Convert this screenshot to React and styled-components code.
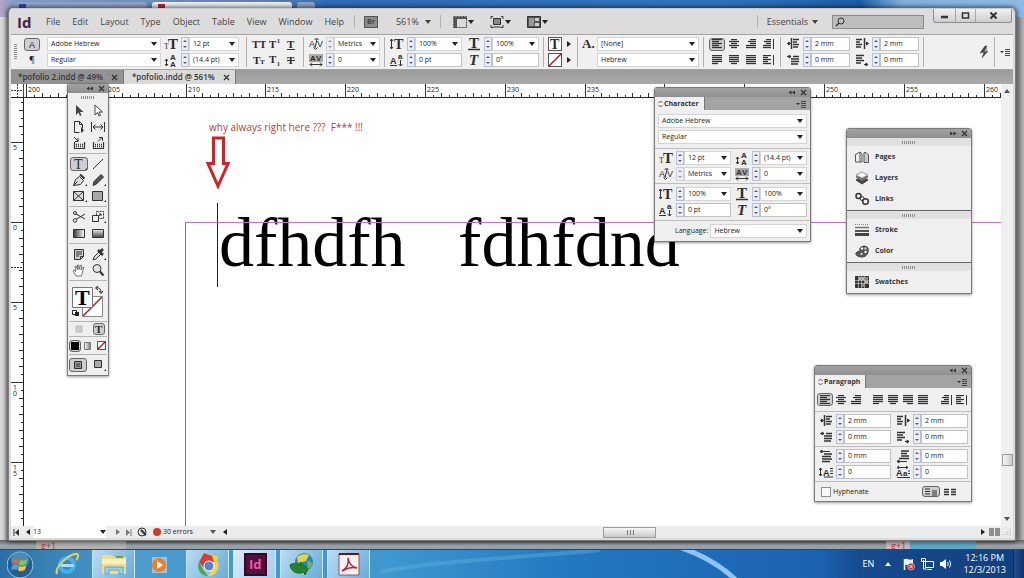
import React from "react";
import styled, { createGlobalStyle, css } from "styled-components";

const ui = `"Open Sans", "Noto Sans", sans-serif`;
const ink = "#333";

const Global = createGlobalStyle`
  * { box-sizing: border-box; }
  html, body { margin: 0; padding: 0; }
  body { font-family: ${ui}; font-size: 7px; line-height: 10px; color: #222; }
  button, input, select { font: inherit; color: inherit; margin: 0; padding: 0; border: 0; background: none; border-radius: 0; outline: 0; }
  button { display: flex; align-items: center; justify-content: center; flex: none; }
  svg { display: block; flex: none; }
`;

/* ---------- desktop ---------- */
const Desktop = styled.div`
  min-height: 100vh;
  display: flex;
  flex-direction: column;
  overflow: hidden;
  background: linear-gradient(90deg, #d8d8d8 0 3px, #a9a9a9 8px, #a9a9a9 calc(100% - 7px), #8c8c8c calc(100% - 6px), #b4b4b4 100%);
  position: relative;
`;
const SharedDefs = styled.svg`
  position: absolute;
`;
const BrowserStrip = styled.div`
  position: absolute;
  inset: 0 0 auto 0;
  height: 17px;
  display: flex;
  gap: 5px;
  padding: 2px 0 0 13px;
  background: linear-gradient(90deg, #b9a7c6 0, #7f9cc9 14px, #5f7db0 26%, #2f6cb5 32%, #2f74c0 70%, #1f5da6 84%, #7fb0de 88%, #8dbbe6 100%);
`;
const BrowserTab = styled.div`
  width: ${(p) => p.$w}px;
  border-radius: 3px 3px 0 0;
  padding: 2px 6px;
  background: ${(p) => (p.$active ? "#eef1f8" : "#93a6cf")};
`;
const Favicon = styled.div`
  width: 7px;
  height: 7px;
  background: ${(p) => p.$c};
`;
const Stage = styled.div`
  flex: 1;
  display: flex;
  padding: 8px;
  position: relative;
`;
const PageBits = styled.div`
  position: absolute;
  inset: auto 0 0 0;
  height: 9px;
  overflow: hidden;
  display: flex;
  padding-left: 36px;
  background: linear-gradient(#5f6266, #a3a5a8 60%, #8aa0b0);
`;
const PlusOne = styled.div`
  width: 90px;
  padding-left: 5px;
  color: #b8342a;
  font-size: 9px;
  line-height: 12px;
  background: ${(p) => (p.$blue ? "linear-gradient(90deg,#c9b9ba 24px,#5fa8c6 24px)" : "#b5b3b0")};
  margin-left: ${(p) => (p.$blue ? "auto" : "0")};
  margin-right: ${(p) => (p.$blue ? "48px" : "0")};
`;

/* ---------- window ---------- */
const Window = styled.main`
  flex: 1;
  display: flex;
  flex-direction: column;
  position: relative;
  border-radius: 5px 5px 2px 2px;
  border: 1px solid #7b7b7b;
  border-top-color: #c9c9c9;
  padding: 0 2px 2px;
  background: #dcdcdc;
  box-shadow: 0 0 5px 1px rgba(0, 0, 0, 0.65);
`;
const MenuBar = styled.header`
  height: 25px;
  display: flex;
  align-items: center;
  padding-left: 6px;
  font-size: 9px;
  line-height: 12px;
  color: #444;
`;
const Logo = styled.div`
  width: 29px;
  font-size: 15px;
  line-height: 18px;
  font-weight: 700;
  color: #4c2043;
`;
const Menus = styled.nav`
  display: flex;
  gap: 12px;
  margin-right: 10px;
`;
const MenuItem = styled.button`
  && { height: 14px; }
`;
const Rule = styled.div`
  width: 1px;
  align-self: stretch;
  margin: ${(p) => (p.$bar ? "2px 4px" : "6px 0")};
  background: #b2b2b2;
  flex: none;
`;
const BridgeButton = styled.button`
  && {
    width: 14px;
    height: 12px;
    margin: 0 18px 0 9px;
    border: 1px solid #555;
    background: #8b8b8b;
    font-size: 7px;
    line-height: 8px;
    font-weight: 700;
  }
`;
const Tri = styled.span`
  display: block;
  flex: none;
  width: 0;
  height: 0;
  border: 3px solid transparent;
  ${(p) => p.$dir === "left" ? css`border-right: 4px solid ${p.$c || "#222"}; border-left: 0;`
    : p.$dir === "right" ? css`border-left: 4px solid ${p.$c || "#222"}; border-right: 0;`
    : p.$dir === "up" ? css`border-bottom: 4px solid ${p.$c || "#222"}; border-top: 0;`
    : css`border-top: 4px solid ${p.$c || "#222"}; border-bottom: 0;`}
`;
const Zoom = styled.button`
  && { gap: 6px; margin-right: 9px; }
`;
const ViewMenus = styled.div`
  display: flex;
  gap: 16px;
  padding-left: 12px;
`;
const ViewButton = styled.button`
  && { gap: 1px; }
`;
const MenuRight = styled.div`
  margin-left: auto;
  display: flex;
  align-self: stretch;
  align-items: center;
`;
const Essentials = styled.button`
  && { gap: 4px; margin: 0 14px 0 9px; }
`;
const Search = styled.label`
  width: 92px;
  height: 14px;
  display: flex;
  align-items: center;
  padding-left: 2px;
  margin-right: 9px;
  border: 1px solid #8b8b8b;
  background: #bdbdbd;
  input { width: 70px; }
`;
const Caption = styled.div`
  align-self: flex-start;
  display: flex;
  margin-right: 1px;
  height: 14px;
  border: 1px solid #8f8f8f;
  border-top: 0;
  border-radius: 0 0 3px 3px;
  background: linear-gradient(#f0f0f0, #cfcfcf);
`;
const CaptionButton = styled.button`
  && { width: ${(p) => p.$w}px; }
  && + & { border-left: 1px solid #a5a5a5; }
`;

/* ---------- shared fields ---------- */
const Combo = styled.span`
  display: flex;
  align-items: center;
  width: ${(p) => (p.$w ? p.$w + "px" : "auto")};
  flex: ${(p) => (p.$w ? "none" : "1")};
  height: 14px;
  background: #fff;
  border: 1px solid #d5d5d5;
  padding-right: 3px;
  select { appearance: none; flex: 1; min-width: 0; height: 12px; padding-left: 3px; }
`;
const TextBox = styled.input`
  && { width: ${(p) => p.$w}px; height: 14px; background: #fff; border: 1px solid #c2c2c2; padding: 0 0 1px 3px; }
`;
const SpinBox = styled.span`
  width: 8px;
  height: 14px;
  flex: none;
  display: grid;
  grid-template-rows: 1fr 1fr;
  border: 1px solid #b9bfce;
  background: #eceef6;
  opacity: ${(p) => (p.$off ? 0.6 : 1)};
  span { border-width: 2px; }
`;
const FieldRow = styled.div`
  display: flex;
  align-items: center;
`;
const IconSlot = styled.span`
  width: 16px;
  margin-right: 2px;
  display: flex;
  justify-content: center;
`;

function Select({ label, value, w }) {
  return (
    <Combo $w={w}>
      <select aria-label={label} defaultValue={value}><option>{value}</option></select>
      <Tri />
    </Combo>
  );
}
function Spin({ label, off }) {
  return (
    <SpinBox $off={off}>
      <button aria-label={`Increase ${label}`} disabled={off}><Tri $dir="up" $c="#56617f" /></button>
      <button aria-label={`Decrease ${label}`} disabled={off}><Tri $c="#56617f" /></button>
    </SpinBox>
  );
}
function Field({ icon, label, value, w, text, off }) {
  return (
    <FieldRow>
      <IconSlot>{icon}</IconSlot>
      <Spin label={label} off={off} />
      {text ? <TextBox aria-label={label} defaultValue={value} $w={w} /> : <Select label={label} value={value} w={w} />}
    </FieldRow>
  );
}

/* ---------- icons ---------- */
const Svg = ({ w = 14, h = 14, children }) => (
  <svg width={w} height={h} viewBox={`0 0 ${w} ${h}`} fill="none" stroke={ink} strokeWidth="1">{children}</svg>
);
const G = ({ x, y, s, children, b = 700, i, f = "Liberation Serif" }) => (
  <text x={x} y={y} fontSize={s} fontWeight={b} fontStyle={i ? "italic" : "normal"} fontFamily={`"${f}", serif`} fill="#2c2c2c" stroke="none">{children}</text>
);
const SizeIcon = () => <Svg><G x="0" y="12" s="8" b={400}>T</G><G x="4" y="12" s="15">T</G></Svg>;
const LeadIcon = () => <Svg><G x="6" y="7" s="8" f="Liberation Sans">A</G><G x="6" y="14" s="8" f="Liberation Sans">A</G><path d="M2.500 6v7M1 8l1.500-2L4 8M1 11l1.500 2L4 11" /></Svg>;
const KernIcon = () => <Svg><G x="0" y="10" s="9" f="Liberation Sans" b={400}>A</G><G x="8" y="10" s="9" f="Liberation Sans" b={400}>V</G><path d="M8 2L6 11M5.500 3l2-2 2 2M4.500 10.500l2 2 2-2" /></Svg>;
const TrackIcon = () => <Svg><path d="M0 1h14v8H0z" fill="#aaa" stroke="none" /><G x="1" y="8" s="8" f="Liberation Sans">A</G><G x="7" y="8" s="8" f="Liberation Sans">V</G><path d="M1 11.500h12M3 9.500l-2 2 2 2M11 9.500l2 2-2 2" /></Svg>;
const VScaleIcon = () => <Svg><G x="4" y="12" s="14">T</G><path d="M1.500 2v10M0 4l1.500-2L3 4M0 10l1.500 2L3 10" /></Svg>;
const HScaleIcon = () => <Svg><G x="2" y="11" s="15">T</G><path d="M1 12.500h12" strokeWidth="1.500" /></Svg>;
const BaseIcon = () => <Svg><G x="0" y="11" s="9" f="Liberation Sans">A</G><G x="8" y="6" s="8" f="Liberation Sans">a</G><path d="M0 12.500h7M10.500 7v6M8.500 11l2 2 2-2" /></Svg>;
const SkewIcon = () => <Svg><G x="2" y="12" s="15" i>T</G></Svg>;

const widths = {
  left: [[0, 10], [0, 7], [0, 10], [0, 7], [0, 10]],
  center: [[2, 6], [0, 10], [2, 6], [0, 10], [2, 6]],
  right: [[4, 6], [2, 8], [4, 6], [0, 10], [0, 10]],
  jleft: [[0, 10], [0, 10], [0, 10], [0, 10], [0, 6]],
  jcenter: [[0, 10], [0, 10], [0, 10], [0, 10], [2, 6]],
  jright: [[0, 10], [0, 10], [0, 10], [0, 10], [4, 6]],
  justify: [[0, 10], [0, 10], [0, 10], [0, 10], [0, 10]],
  spine: [[3, 5], [1, 7], [3, 5], [0, 8], [0, 8]],
  away: [[0, 8], [0, 5], [0, 8], [0, 5], [0, 8]],
};
const AlignIcon = ({ t }) => (
  <Svg w={12} h={10}>
    {widths[t].map(([x, w], i) => <path key={i} d={`M${x + 1} ${i * 2 + 0.5}h${w}`} stroke="#333" strokeWidth="1.300" />)}
    {(t === "spine" || t === "away") && <path d="M11.500 0v10" />}
  </Svg>
);
const IndentIcon = ({ t }) => {
  const p = {
    left: <><path d="M5.500 1v11M7 2.500h6M7 5h4M7 7.500h6M7 10h5" strokeWidth="1.500" /><path d="M1 6.500h3M2.500 5l2 1.500-2 1.500z" fill={ink} /></>,
    right: <><path d="M9.500 1v11M1 2.500h6M1 5h4M1 7.500h6M1 10h5" strokeWidth="1.500" /><path d="M11 6.500h2M11.500 5l2 1.500-2 1.500z" fill={ink} /></>,
    first: <><path d="M7 3.500h6M5 6h8M5 8.500h8M5 11h7" strokeWidth="1.500" /><path d="M1 3.500h4M3 2l2 1.500-2 1.500z" fill={ink} /></>,
    last: <><path d="M1 2.500h8M1 5h6M1 7.500h8M1 10h5" strokeWidth="1.500" /><path d="M9 11.500h3M11 10l2 1.500-2 1.500z" fill={ink} /></>,
    before: <><path d="M5 5h8M3 7.500h9M3 10h10M3 12.500h8" strokeWidth="1.500" /><path d="M1 2.500h10M3 1L1 2.500 3 4z" fill={ink} /></>,
    after: <><path d="M5 2h8M5 4.500h6M5 7h8M3 9.500h10" strokeWidth="1.500" /><path d="M1 12.500h10M3 11l-2 1.500L3 14z" fill={ink} /></>,
    drop: <><G x="4" y="11" s="9" f="Liberation Sans">A</G><path d="M11 3.500h3M11 6h3M11 8.500h3M5 12h9M1.500 3v8M0 5l1.500-2L3 5M0 9l1.500 2L3 9" /></>,
    auto: <><G x="0" y="11" s="9" f="Liberation Sans">A</G><G x="7" y="11" s="8" f="Liberation Sans">a</G><path d="M1 2.500h11M10 1l2 1.500L10 4M3 1L1 2.500 3 4M1 12.500h13M12 6h2M12 8.500h2" /></>,
  };
  return <Svg>{p[t]}</Svg>;
};
const FillT = () => <Svg><rect x=".5" y=".5" width="13" height="13" fill="#fff" stroke="#555" /><G x="2" y="12" s="14">T</G></Svg>;
const NoneBox = ({ s = 14 }) => <Svg w={s} h={s}><rect x=".5" y=".5" width={s - 1} height={s - 1} fill="#fff" stroke="#555" /><path d={`M1 ${s - 1}L${s - 1} 1`} stroke="#b0152d" strokeWidth="1.500" /></Svg>;
const MenuGlyph = () => <Svg w={12} h={10}><path d="M1 4h4L3 6z" fill={ink} stroke="none" /><path d="M6 2.500h5M6 4.500h5M6 6.500h5M6 8.500h5" stroke="#444" /></Svg>;
const Cross = () => <Svg w={7} h={7}><path d="M1 1l5 5M6 1L1 6" strokeWidth="1.200" /></Svg>;
const Doubles = ({ flip }) => <Svg w={8} h={7}><path d={flip ? "M1 1.500l3 2-3 2zM4.500 1.500l3 2-3 2z" : "M3.500 1.500l-3 2 3 2zM7 1.500l-3 2 3 2z"} fill={ink} stroke="none" /></Svg>;

/* ---------- control bar ---------- */
const ControlBar = styled.section`
  height: 36px;
  display: flex;
  align-items: center;
  padding: 0 2px 0 3px;
  background: #f0f0f0;
  border: 1px solid #a3a3a3;
  border-width: 1px 0;
`;
const Grip = styled.div`
  flex: none;
  width: ${(p) => (p.$v ? 3 : 14)}px;
  height: ${(p) => (p.$v ? 16 : 3)}px;
  background: ${(p) => p.$v
    ? "repeating-linear-gradient(#8d8d8d 0 1px, transparent 1px 2px)"
    : "repeating-linear-gradient(90deg, #8d8d8d 0 1px, transparent 1px 2px)"};
`;
const Stack = styled.div`
  display: grid;
  grid-template-rows: 14px 14px;
  row-gap: 2px;
  margin-left: ${(p) => p.$ml || 0}px;
  margin-right: ${(p) => p.$mr || 0}px;
  align-items: center;
`;
const Mode = styled.button`
  && {
    width: ${(p) => p.$w || 16}px;
    height: ${(p) => p.$h || 13}px;
    border: 1px solid ${(p) => (p.$on ? "#666" : "transparent")};
    border-radius: 3px;
    background: ${(p) => (p.$on ? "#cfcfcf" : "transparent")};
    font-size: 9px;
  }
`;
const Cells = styled.div`
  display: grid;
  grid-template-columns: repeat(${(p) => p.$n}, ${(p) => p.$w}px);
  grid-auto-rows: 14px;
  row-gap: 2px;
  justify-items: center;
  align-items: center;
`;
const PopRow = styled.div`
  display: flex;
  align-items: center;
  gap: 5px;
  padding-right: 2px;
`;
const Push = styled.div`
  margin-left: auto;
`;

function TypeStyles() {
  return (
    <Cells $n={3} $w={16}>
      <button aria-label="All caps"><Svg><G x="0" y="11" s="11">TT</G></Svg></button>
      <button aria-label="Superscript"><Svg><G x="1" y="11" s="11">T</G><G x="9" y="6" s="6">1</G></Svg></button>
      <button aria-label="Underline"><Svg><G x="3" y="11" s="11">T</G><path d="M3 12.500h8" /></Svg></button>
      <button aria-label="Small caps"><Svg><G x="1" y="11" s="11">T</G><G x="8" y="11" s="7">T</G></Svg></button>
      <button aria-label="Subscript"><Svg><G x="1" y="10" s="11">T</G><G x="9" y="13" s="6">1</G></Svg></button>
      <button aria-label="Strikethrough"><Svg><G x="3" y="11" s="11">T</G><path d="M3 7.500h8" /></Svg></button>
    </Cells>
  );
}
function Controls() {
  return (
    <ControlBar aria-label="Control">
      <Grip $v />
      <Stack $ml={7}>
        <Mode $on aria-label="Character formatting"><Svg w={9} h={9}><G x="1" y="8" s="9" b={400} f="Liberation Sans">A</G></Svg></Mode>
        <Mode aria-label="Paragraph formatting">¶</Mode>
      </Stack>
      <Stack $ml={7}>
        <Select label="Font family" value="Adobe Hebrew" w={114} />
        <Select label="Font style" value="Regular" w={114} />
      </Stack>
      <Stack $ml={2} $mr={3}>
        <Field icon={<SizeIcon />} label="Font size" value="12 pt" w={50} />
        <Field icon={<LeadIcon />} label="Leading" value="(14.4 pt)" w={50} />
      </Stack>
      <Rule $bar />
      <TypeStyles />
      <Rule $bar />
      <Stack>
        <Field icon={<KernIcon />} label="Kerning" value="Metrics" w={46} off />
        <Field icon={<TrackIcon />} label="Tracking" value="0" w={46} />
      </Stack>
      <Rule $bar />
      <Stack>
        <Field icon={<VScaleIcon />} label="Vertical scale" value="100%" w={47} />
        <Field icon={<BaseIcon />} label="Baseline shift" value="0 pt" w={47} text />
      </Stack>
      <Stack $ml={4}>
        <Field icon={<HScaleIcon />} label="Horizontal scale" value="100%" w={47} />
        <Field icon={<SkewIcon />} label="Skew" value="0°" w={47} text />
      </Stack>
      <Rule $bar />
      <Stack>
        <PopRow><FillT /><Tri $dir="right" /></PopRow>
        <PopRow><NoneBox /><Tri $dir="right" /></PopRow>
      </Stack>
      <Rule $bar />
      <Stack>
        <FieldRow><Svg w={15}><G x="0" y="11" s="13">A.</G></Svg><Select label="Character style" value="[None]" w={102} /></FieldRow>
        <FieldRow><Svg w={15} /><Select label="Language" value="Hebrew" w={102} /></FieldRow>
      </Stack>
      <Rule $bar />
      <Cells $n={4} $w={17}>
        <Mode $on aria-label="Align left"><AlignIcon t="left" /></Mode>
        {["center", "right", "spine", "jleft", "jcenter", "justify", "away"].map((t) => (
          <Mode key={t} aria-label={`Align ${t}`}><AlignIcon t={t} /></Mode>
        ))}
      </Cells>
      <Rule $bar />
      <Stack>
        <Field icon={<IndentIcon t="left" />} label="Left indent" value="2 mm" w={39} text />
        <Field icon={<IndentIcon t="first" />} label="First line indent" value="0 mm" w={39} text />
      </Stack>
      <Stack $ml={4}>
        <Field icon={<IndentIcon t="right" />} label="Right indent" value="2 mm" w={39} text />
        <Field icon={<IndentIcon t="last" />} label="Last line indent" value="0 mm" w={39} text />
      </Stack>
      <Rule $bar />
      <Push />
      <button aria-label="Quick apply"><Svg w={12}><path d="M7 1L2 8l4-1-2 6 6-7-4 1 3-6zM9 3l-1 3" fill="#444" stroke="#444" strokeWidth=".5" /></Svg></button>
      <Rule $bar />
      <button aria-label="Control panel menu"><MenuGlyph /></button>
    </ControlBar>
  );
}

/* ---------- document ---------- */
const Tabs = styled.div`
  height: 14px;
  display: flex;
  background: linear-gradient(#9b9b9b, #a9a9a9);
`;
const Tab = styled.button`
  && {
    gap: 8px;
    padding: 0 5px 0 ${(p) => (p.$on ? 8 : 7)}px;
    background: ${(p) => (p.$on ? "#dadada" : "#929292")};
    border-right: 1px solid #777;
    font-size: 8px;
    font-weight: 600;
    color: #363636;
  }
`;
const DocGrid = styled.div`
  flex: 1;
  display: grid;
  grid-template-columns: 13px 1fr 12px;
  grid-template-rows: 14px 1fr;
  background: #fff;
`;
const RulerBox = styled.div`
  overflow: hidden;
  background: #fff;
  border-bottom: ${(p) => (p.$h ? "1px solid #222" : 0)};
  border-right: ${(p) => (p.$h ? 0 : "1px solid #222")};
  position: relative;
  svg { position: absolute; inset: 0; }
`;
const Canvas = styled.div`
  position: relative;
  overflow: hidden;
  min-height: 428px;
`;
const PageFrame = styled.div`
  position: absolute;
  inset: 124px 0 0 161px;
  border: solid;
  border-width: 1px 0 0 1px;
  border-color: #c46fd0 transparent transparent #a35cb4;
`;
const Note = styled.p`
  position: absolute;
  left: 185px;
  top: 22px;
  margin: 0;
  font-size: 10px;
  line-height: 14px;
  white-space: pre;
  color: #c0393d;
`;
const ArrowMark = styled.div`
  position: absolute;
  left: 182px;
  top: 38px;
`;
const Story = styled.div`
  position: absolute;
  left: 193px;
  top: 105px;
  height: 84px;
  padding-left: 1px;
  border-left: 1px solid #222;
  font-family: "Liberation Serif", serif;
  font-size: 70px;
  line-height: 80px;
  white-space: pre;
  color: #000;
`;
const VScroll = styled.div`
  grid-column: 3;
  grid-row: 1 / 3;
  display: flex;
  flex-direction: column;
  align-items: center;
  padding: 5px 0;
  background: #efefef;
`;
const ThumbV = styled.div`
  width: 11px;
  height: 12px;
  margin: auto 0 51px;
  border: 1px solid #9c9c9c;
  background: linear-gradient(90deg, #f6f6f6, #c9c9c9);
`;

const range = (n) => Array.from({ length: n }, (_, i) => i);
const step = 79.8;
function HRuler() {
  return (
    <RulerBox $h>
      <svg width="2400" height="14" stroke="#333">
        {range(300).map((i) => {
          const x = Math.round(2 + (i * step) / 10) + 0.5;
          const major = i % 10 === 0;
          return <path key={i} d={`M${x} ${major ? 0 : i % 2 ? 11 : 9}V14`} />;
        })}
        {range(13).map((i) => (
          <text key={i} x={Math.round(4 + i * step)} y="8" fontSize="7" fill="#222" stroke="none">{200 + i * 5}</text>
        ))}
      </svg>
    </RulerBox>
  );
}
function VRuler() {
  return (
    <RulerBox>
      <svg width="12" height="1600" stroke="#333">
        {range(190).map((i) => {
          const y = Math.round(44 + ((i - 5) * 80) / 10) + 0.5;
          return <path key={i} d={`M${(i - 5) % 10 === 0 ? 0 : i % 2 ? 8 : 10} ${y}H12`} />;
        })}
        <path d="M0 169.500h12" strokeDasharray="2 1" />
        {["5", "0", "5", "10", "15"].map((t, i) =>
          t.split("").map((c, j) => (
            <text key={i + "-" + j} x="2" y={52 + i * 80 + j * 6} fontSize="7" fill="#222" stroke="none">{c}</text>
          ))
        )}
      </svg>
    </RulerBox>
  );
}

/* ---------- status bar ---------- */
const StatusBar = styled.footer`
  height: 12px;
  display: flex;
  align-items: center;
  background: #ececec;
`;
const PageCombo = styled.span`
  width: 73px;
  height: 12px;
  margin-right: 6px;
  display: flex;
  align-items: center;
  background: #fff;
  select { appearance: none; flex: 1; }
`;
const StatusButton = styled.button`
  && { width: ${(p) => p.$w || 11}px; height: 12px; }
`;
const Preflight = styled.button`
  && { gap: 2px; margin: 0 17px 0 1px; }
`;
const Dot = styled.span`
  width: 8px;
  height: 8px;
  border-radius: 4px;
  background: #d13a24;
`;
const HTrack = styled.div`
  flex: 1;
  display: flex;
  justify-content: flex-end;
  padding-right: 32%;
`;
const ThumbH = styled.div`
  width: 53px;
  height: 11px;
  display: flex;
  align-items: center;
  justify-content: center;
  border: 1px solid #9c9c9c;
  background: linear-gradient(#f6f6f6, #c9c9c9);
`;
const Pane = styled.span`
  width: 5px;
  height: 8px;
  margin-left: 1px;
  background: #8f8f8f;
`;

/* ---------- floating panels ---------- */
const Panel = styled.section`
  position: absolute;
  top: ${(p) => p.$top}px;
  ${(p) => (p.$left !== undefined ? `left: ${p.$left}px;` : `right: ${p.$right}px;`)}
  width: ${(p) => p.$w}px;
  border: 1px solid #7a7a7a;
  border-radius: 3px 3px 0 0;
  background: #efefef;
  box-shadow: 0 1px 3px rgba(0, 0, 0, 0.4);
`;
const PanelHead = styled.div`
  height: 9px;
  display: flex;
  justify-content: flex-end;
  align-items: center;
  gap: 4px;
  padding-right: 3px;
  background: linear-gradient(#a2a2a2, #8f8f8f);
  border-radius: 2px 2px 0 0;
`;
const PanelTabs = styled.div`
  height: 13px;
  display: flex;
  justify-content: space-between;
  align-items: center;
  padding-right: 3px;
  background: #a3a3a3;
`;
const PanelTab = styled.h2`
  margin: 0;
  height: 13px;
  display: flex;
  align-items: center;
  gap: 1px;
  padding: 0 5px 0 3px;
  font-size: 7px;
  line-height: 12px;
  font-weight: 700;
  color: #333;
  background: #efefef;
  border-right: 1px solid #777;
`;
const Part = styled.div`
  padding: ${(p) => p.$py || 2}px 3px;
  display: grid;
  gap: 2px;
  border-bottom: ${(p) => (p.$last ? 0 : "1px solid #bdbdbd")};
`;
const Pair = styled.div`
  display: flex;
  justify-content: space-between;
`;
const LangRow = styled.label`
  display: flex;
  align-items: center;
  gap: 2px;
  padding-left: 17px;
`;
const AlignRow = styled.div`
  height: 24px;
  display: flex;
  align-items: center;
  justify-content: space-between;
  padding: 0 3px 0 2px;
  border-bottom: 1px solid #bdbdbd;
`;
const AlignSet = styled.div`
  display: flex;
`;
const Check = styled.label`
  display: flex;
  align-items: center;
  gap: 2px;
  input { appearance: none; width: 10px; height: 10px; border: 1px solid #8d8d8d; background: #f8f8f8; }
`;
const FootRow = styled.div`
  height: 19px;
  display: flex;
  align-items: center;
  padding: 0 12px 0 6px;
  gap: 1px;
`;
const Head = ({ flip }) => (
  <PanelHead>
    <button aria-label="Collapse panel"><Doubles flip={flip} /></button>
    <button aria-label="Close panel"><Cross /></button>
  </PanelHead>
);
const Title = ({ children }) => (
  <PanelTabs>
    <PanelTab><Svg w={5} h={8}><path d="M.5 3l2-2 2 2M.5 5l2 2 2-2" strokeWidth=".8" /></Svg>{children}</PanelTab>
    <button aria-label="Panel menu"><MenuGlyph /></button>
  </PanelTabs>
);
function CharacterPanel() {
  return (
    <Panel $top={78} $right={204} $w={157}>
      <Head />
      <Title>Character</Title>
      <Part $py={4}>
        <Select label="Panel font family" value="Adobe Hebrew" />
        <Select label="Panel font style" value="Regular" />
      </Part>
      <Part $py={2}>
        <Pair>
          <Field icon={<SizeIcon />} label="Size" value="12 pt" w={47} />
          <Field icon={<LeadIcon />} label="Leading" value="(14.4 pt)" w={47} />
        </Pair>
        <Pair>
          <Field icon={<KernIcon />} label="Kerning" value="Metrics" w={47} off />
          <Field icon={<TrackIcon />} label="Tracking" value="0" w={47} />
        </Pair>
      </Part>
      <Part $py={3}>
        <Pair>
          <Field icon={<VScaleIcon />} label="Vertical scale" value="100%" w={47} />
          <Field icon={<HScaleIcon />} label="Horizontal scale" value="100%" w={47} />
        </Pair>
        <Pair>
          <Field icon={<BaseIcon />} label="Baseline shift" value="0 pt" w={47} text />
          <Field icon={<SkewIcon />} label="Skew" value="0°" w={47} text />
        </Pair>
      </Part>
      <Part $py={3} $last>
        <LangRow>Language: <Select label="Language" value="Hebrew" /></LangRow>
      </Part>
    </Panel>
  );
}
function ParagraphPanel() {
  const set = (list, on) => (
    <AlignSet>
      {list.map((t) => <Mode key={t} $w={t === on ? 16 : 15} $on={t === on} aria-label={`Paragraph ${t}`}><AlignIcon t={t} /></Mode>)}
    </AlignSet>
  );
  const F = ({ t, l, v }) => <Field icon={<IndentIcon t={t} />} label={l} value={v} w={47} text />;
  return (
    <Panel $top={356} $right={43} $w={158}>
      <Head />
      <Title>Paragraph</Title>
      <AlignRow>
        {set(["left", "center", "right"], "left")}
        {set(["jleft", "jcenter", "jright", "justify"])}
        {set(["spine", "away"])}
      </AlignRow>
      <Part $py={2}>
        <Pair><F t="left" l="Left indent" v="2 mm" /><F t="right" l="Right indent" v="2 mm" /></Pair>
        <Pair><F t="first" l="First line indent" v="0 mm" /><F t="last" l="Last line indent" v="0 mm" /></Pair>
      </Part>
      <Part $py={2}>
        <Pair><F t="before" l="Space before" v="0 mm" /><F t="after" l="Space after" v="0 mm" /></Pair>
        <Pair><F t="drop" l="Drop cap lines" v="0" /><F t="auto" l="Drop cap characters" v="0" /></Pair>
      </Part>
      <FootRow>
        <Check><input type="checkbox" />Hyphenate</Check>
        <Push />
        <Mode $on $w={18} $h={11} aria-label="Do not align to grid"><Svg w={14} h={8}><path d="M1 1h5M1 3.500h5M1 6h5M8 3h5M8 5h5M8 7h5" stroke="#333" /></Svg></Mode>
        <Mode $w={18} $h={11} aria-label="Align to grid"><Svg w={14} h={8}><path d="M1 1.500h5M1 4h5M1 6.500h5M8 1.500h5M8 4h5M8 6.500h5" strokeWidth="1.500" /></Svg></Mode>
      </FootRow>
    </Panel>
  );
}

const GripBand = styled.div`
  height: 8px;
  display: flex;
  align-items: center;
  justify-content: center;
  background: ${(p) => (p.$plain ? "transparent" : "#e0e0e0")};
`;
const DockGroup = styled.div`
  & + & { border-top: 1px solid #666; }
`;
const DockItem = styled.button`
  && { width: 100%; height: 21px; justify-content: flex-start; gap: 6px; padding-left: 8px; font-weight: 700; color: #333; }
`;
const DockList = styled.div`
  padding-bottom: 1px;
`;
const dockIcons = {
  Pages: <Svg><path d="M.5 4.500L5 2v10H.5zM5 2l2 2v8H5" fill="#eee" stroke="#555" /><path d="M9 12.500V2.500h2l2.500 2.500v7.500z" fill="#ccc" stroke="#555" /></Svg>,
  Layers: <Svg><path d="M1 9l6-3 6 3-6 4z" fill="#444" stroke="#444" /><path d="M1 6l6-3 6 3-6 4z" fill="#777" stroke="#666" /><path d="M1 4l6-3 6 3-6 3z" fill="#fff" stroke="#999" /></Svg>,
  Links: <Svg><circle cx="3.500" cy="4" r="2.500" strokeWidth="1.500" /><circle cx="7" cy="6.500" r="2" /><circle cx="10.500" cy="9.500" r="2.800" strokeWidth="1.500" /></Svg>,
  Stroke: <Svg><path d="M0 1.500h14" strokeDasharray="1 1" stroke="#888" /><path d="M0 4.500h14" stroke="#777" strokeWidth="1.500" /><path d="M0 8h14" stroke="#555" strokeWidth="2" /><path d="M0 11.500h14" stroke="#444" strokeWidth="3" /></Svg>,
  Color: <Svg><path d="M13 4c1 4-1 9-6 9-4 0-7-2-6-4s3-1 4-2C3 3 10 0 13 4z" fill="#555" stroke="#444" /><circle cx="7" cy="4.500" r="1.200" fill="#eee" stroke="none" /><circle cx="10.500" cy="4.500" r="1.200" fill="#ccc" stroke="none" /><circle cx="10.500" cy="8" r="1.200" fill="#eee" stroke="none" /><circle cx="6.500" cy="10" r="1.200" fill="#ccc" stroke="none" /></Svg>,
  Swatches: <Svg><path d="M.5 1.500h13v11H.5z" fill="#333" /><path d="M4 2h2v3H4zM7 2h2v3H7zM10 6h3v2h-3z" fill="#bbb" stroke="none" /><path d="M7 9h2v3H7zM10 2h3v3h-3z" fill="#888" stroke="none" /><path d="M0 5.500h14M0 8.500h14M3.500 1v12M6.500 1v12M9.500 1v12" stroke="#ddd" strokeWidth=".6" /></Svg>,
};
function Dock() {
  return (
    <Panel $top={119} $right={43} $w={126} aria-label="Panel dock">
      <Head flip />
      {[["Pages", "Layers", "Links"], ["Stroke", "Color"], ["Swatches"]].map((g) => (
        <DockGroup key={g[0]}>
          <GripBand><Grip /></GripBand>
          <DockList>{g.map((n) => <DockItem key={n}>{dockIcons[n]}{n}</DockItem>)}</DockList>
        </DockGroup>
      ))}
    </Panel>
  );
}

const ToolGroup = styled.div`
  display: grid;
  grid-template-columns: 19px 19px;
  grid-auto-rows: 16px;
  padding: 2px 0;
  margin: 0 1px;
  justify-items: center;
  align-items: center;
  border-bottom: 1px solid #b5b5b5;
`;
const ToolRow = styled.div`
  height: ${(p) => p.$h}px;
  margin: 0 1px;
  display: flex;
  align-items: center;
  justify-content: ${(p) => (p.$c ? "center" : "space-around")};
  gap: 1px;
  border-bottom: ${(p) => (p.$last ? 0 : "1px solid #b5b5b5")};
`;
const Corner = <path d="M14 13h2v-2z" fill="#222" stroke="none" />;
const T = ({ children, c }) => <Svg w={16} h={14}>{children}{c && Corner}</Svg>;
const toolGroups = [
  [
    ["Selection", <T><path d="M5 1v10l2.500-2.500L9 12l1.500-.7L9 8h3.500z" fill="#444" stroke="none" /></T>],
    ["Direct selection", <T><path d="M5 1v10l2.500-2.500L9 12l1.500-.7L9 8h3.500z" fill="#fff" stroke="#444" /></T>],
    ["Page", <T><path d="M3.500 1.500h5l3 3v4M3.500 1.500v11h5M8.500 1.500v3h3" /><path d="M10 7v6l3-2.500z" fill="#333" stroke="none" /></T>],
    ["Gap", <T><path d="M1.500 2v10M14.500 2v10M3 7h10M5.500 4.500L3 7l2.500 2.500M10.500 4.500L13 7l-2.500 2.500" /></T>],
    ["Content collector", <T><path d="M3.500 6v6.500h10V6" strokeWidth="1.200" /><path d="M5 8.500h7M5 10.500h7" strokeDasharray="1 1" strokeWidth="1.500" /><path d="M3 1l4 4M7 2v3.500H4" /></T>],
    ["Content placer", <T><path d="M3.500 6v6.500h10V6" strokeWidth="1.200" /><path d="M5 8.500h7M5 10.500h7" strokeDasharray="1 1" strokeWidth="1.500" /><path d="M8 5.500l4-4M9 1.500h3.500V5" /></T>],
  ],
  [
    ["Type", <T><G x="3" y="12" s="14" b={400}>T</G>{Corner}</T>],
    ["Line", <T><path d="M3 12L13 2" /></T>],
    ["Pen", <T c><path d="M2.500 12.500l2-6 4-3 4 4-3 4-7 1zl4-4" fill="#ddd" /><path d="M9 1.500l4.500 4" strokeWidth="2" /></T>],
    ["Pencil", <T c><path d="M3 12.500l1-4 7-7 2.500 2.500-7 7z" fill="#555" /></T>],
    ["Rectangle frame", <T c><path d="M2.500 2.500h10v9h-10zl10 9M12.500 2.500l-10 9" fill="#ddd" /></T>],
    ["Rectangle", <T c><path d="M2.500 2.500h10v9h-10z" fill="#aaa" /></T>],
  ],
  [
    ["Scissors", <T><path d="M5 4l9 5M5 9.500L14 4" /><circle cx="4" cy="3" r="1.500" /><circle cx="4" cy="10.500" r="1.800" /></T>],
    ["Free transform", <T c><path d="M6.500 1.500h7v7h-7z" strokeDasharray="2 1" /><path d="M2.500 5.500h6v6h-6z" fill="#eee" /><path d="M8 7l3-3M9 4h2v2" /></T>],
    ["Gradient", <T><path d="M2.500 3.500h11v8h-11z" fill="url(#gh)" /></T>],
    ["Gradient feather", <T><path d="M2.500 3.500h11v8h-11z" fill="url(#gv)" /></T>],
  ],
  [
    ["Note", <T><path d="M3.500 2.500h9v7l-3 3h-6zM5 5h6M5 7h6M5 9h3M9.500 12V9.500h3" fill="#ccc" /></T>],
    ["Eyedropper", <T c><path d="M3 13l1-3 5-5 2 2-5 5z" fill="#ddd" /><path d="M8 3l5 5M10 5l3-3" strokeWidth="2.500" /></T>],
    ["Hand", <T><path d="M5 13L2 8l1-1 2 1.500L4 3.500l1-.5 1.500 3.500V2h1.200l.3 4.500L9.500 2l1 .5L10 7l2-3 .8.5L11.500 9 10.500 13z" fill="#fff" stroke="#555" strokeWidth=".8" /></T>],
    ["Zoom", <T><circle cx="7" cy="5.500" r="4" fill="#e5e5e5" /><path d="M10 8.500l3.500 4" strokeWidth="2" /></T>],
  ],
];
function Tools() {
  return (
    <Panel $top={74} $left={58} $w={42} aria-label="Tools">
      <Head />
      <GripBand $plain><Grip /></GripBand>
      {toolGroups.map((g, i) => (
        <ToolGroup key={i}>
          {g.map(([n, icon]) => <Mode key={n} $w={18} $h={14} $on={n === "Type"} aria-label={n}>{icon}</Mode>)}
        </ToolGroup>
      ))}
      <ToolRow $h={41} $c>
        <svg width="36" height="34" viewBox="0 0 36 34">
          <path d="M12.500 12.500h20v20h-20z" fill="#fff" stroke="#888" />
          <path d="M13 32L32 13" stroke="#b0152d" strokeWidth="1.500" />
          <path d="M2.500 3.500h20v20h-20z" fill="#fff" stroke="#777" />
          <text x="5" y="21" fontFamily="Liberation Serif, serif" fontSize="22" fontWeight="700">T</text>
          <path d="M26 4c4-1 5 2 5 5M29 7l2 2.500L33 7M28 2l-2.500 2L28 6" fill="none" stroke="#222" />
          <path d="M2.500 26.500h4v4h-4z" fill="#fff" stroke="#222" /><path d="M5 28h4v4H5z" fill="#222" />
        </svg>
      </ToolRow>
      <ToolRow $h={15}>
        <Mode aria-label="Formatting affects container"><Svg w={8} h={8}><path d="M1 1h6v6H1z" fill="#ccc" stroke="#bbb" /></Svg></Mode>
        <Mode $on $w={12} $h={12} aria-label="Formatting affects text"><Svg w={10} h={10}><G x="1" y="9" s="11">T</G></Svg></Mode>
      </ToolRow>
      <ToolRow $h={18}>
        <Mode $on $w={12} $h={12} aria-label="Apply color"><Svg w={8} h={8}><path d="M0 0h8v8H0z" fill="#000" stroke="none" /></Svg></Mode>
        <Mode $w={12} $h={12} aria-label="Apply gradient"><Svg w={8} h={8}><path d="M.5.5h6v7h-6z" fill="url(#gl)" stroke="#777" /></Svg></Mode>
        <Mode $w={12} $h={12} aria-label="Apply none"><NoneBox s={9} /></Mode>
      </ToolRow>
      <ToolRow $h={20} $last>
        <Mode $on $w={18} $h={14} aria-label="Normal view"><Svg w={10} h={10}><path d="M1.500 1.500h7v7h-7zM3 4h4M3 6h4" fill="#999" /></Svg></Mode>
        <Mode $w={18} $h={14} aria-label="Preview"><T c><path d="M4.500 2.500h7v7h-7z" fill="#aaa" /></T></Mode>
      </ToolRow>
    </Panel>
  );
}

/* ---------- taskbar ---------- */
const Taskbar = styled.footer`
  height: 29px;
  display: flex;
  align-items: stretch;
  gap: 4px;
  position: relative;
  overflow: hidden;
  border-top: 1px solid #1f4a78;
  background: linear-gradient(90deg, #2a70a6 0, #4b9ccc 12%, #3f97cf 38%, #2479c0 55%, #1c62b2 80%, #164b8e 84%, #123f7c 100%);
  color: #fff;
  font-size: 9px;
  line-height: 12px;
`;
const Glow = styled.svg`
  position: absolute;
  inset: 0 auto auto 0;
`;
const Task = styled.button`
  && {
    width: ${(p) => p.$w || 43}px;
    position: relative;
    border: ${(p) => (p.$open ? "1px solid rgba(225,242,255,.75)" : "0")};
    border-width: ${(p) => (p.$open ? "0 1px" : 0)};
    background: ${(p) => (p.$active ? "linear-gradient(120deg,#d8eafa,#a5cdee)" : p.$open ? "linear-gradient(120deg,#b9dcf2,#69acd8)" : "none")};
  }
`;
const Tray = styled.div`
  margin-left: auto;
  display: flex;
  align-items: center;
  gap: 11px;
  position: relative;
`;
const TrayIcons = styled.div`
  display: flex;
  align-items: center;
  gap: 4px;
`;
const Clock = styled.time`
  text-align: center;
`;
const ShowDesktop = styled.button`
  && { align-self: stretch; width: 11px; margin-left: -4px; border-left: 1px solid #0b2b58; background: linear-gradient(90deg, #1f4f8f, #0f3468); }
`;
const I = ({ children }) => <svg width="28" height="28" viewBox="0 0 28 28" fill="none">{children}</svg>;

function TaskBar() {
  return (
    <Taskbar>
      <Glow width="1024" height="29" viewBox="0 0 1024 29" fill="none">
        <path d="M380 22C440 10 520 8 600 0" stroke="#66b3df" strokeOpacity=".4" strokeWidth="4" />
        <path d="M676-4Q714 8 738 32" stroke="#8ec4fb" strokeWidth="5" />
      </Glow>
      <Task $w={41} aria-label="Start">
        <I><circle cx="13" cy="15" r="13" fill="#245d92" stroke="#9dc9e4" /><circle cx="13" cy="10" r="9" fill="#5d9dc8" opacity=".7" />
          <path d="M6 10q3-2 6-.5L11 14q-3-1.500-6 .5z" fill="#e8622b" /><path d="M13 10q3 1.500 7-.5L19 14q-4 2-7 .5z" fill="#8cc63f" /><path d="M5 16q3-2 6-.5L10 20q-3-1.500-6 .5z" fill="#4aa3e0" /><path d="M12 16q3 1.500 7-.5L18 20q-4 2-7 .5z" fill="#fbc52d" /></I>
      </Task>
      <Task aria-label="Internet Explorer">
        <I><circle cx="14" cy="15" r="7" stroke="#3fb4f0" strokeWidth="4" /><path d="M8 15.500h13" stroke="#a8e0fb" strokeWidth="3" /><path d="M4 24C1 18 16 3 24 4c2 1 1 4-1 6" stroke="#f1cd55" strokeWidth="2" /></I>
      </Task>
      <Task $open aria-label="Explorer">
        <I><path d="M2 5h10l2 2h12v17H2z" fill="#f3d98a" /><path d="M2 9h24v5H2z" fill="#fbefc0" /><path d="M5 24v-7h18v7h-4v-4H9v4z" fill="#9bd0ee" stroke="#5ba3cf" /><path d="M16 6h7v2h-7z" fill="#63a54a" /></I>
      </Task>
      <Task aria-label="Media player">
        <I><path d="M5 7h15v16H5z" fill="#b9d7ea" opacity=".7" /><circle cx="12" cy="15" r="7" fill="#ee7d28" /><path d="M10 11l6 4-6 4z" fill="#fff" /></I>
      </Task>
      <Task $open aria-label="Chrome">
        <I><path d="M14 6l10 0-2 9h-8z" fill="#f5cf3b" /><path d="M5 12L10 3l8 3 2 6-6 2-4 4z" fill="#dd3c2e" /><path d="M5 12l5 9 4 5c-7 0-12-7-9-14z" fill="#48a84c" /><path d="M14 26c8 0 12-7 10-14h-6v7z" fill="#f8d23d" /><circle cx="15" cy="16" r="5.500" fill="#fff" /><circle cx="15" cy="16" r="4.500" fill="#5b7fe0" /></I>
      </Task>
      <Task $open $active aria-label="InDesign">
        <I><path d="M4 4h21v21H4z" fill="#56103c" stroke="#350a26" strokeWidth="2" /><text x="8" y="19" fontSize="13" fontFamily="Open Sans, sans-serif" fontWeight="700" fill="#e65aa5">Id</text></I>
      </Task>
      <Task $open aria-label="Download manager">
        <I><circle cx="16" cy="12" r="9" fill="#2f83ba" /><path d="M9 7q6-5 12-2l-3 6-8 2z" fill="#e4d43f" /><path d="M19 11q5 0 5 4l-4 4z" fill="#71b94a" /><path d="M2 15c4-3 8-1 11 1l-1-4 8 7-3 6-1-3C10 25 3 22 2 15z" fill="#25842b" stroke="#156a1c" /></I>
      </Task>
      <Task $open aria-label="Acrobat">
        <I><path d="M4 4h20v21H4z" fill="#f7f2f2" stroke="#98555b" /><path d="M4 3h20v2H4z" fill="#6e1216" /><path d="M7 21c5-3 7-8 6-13 1 6 4 9 9 10-4-1-10 0-15 3z" stroke="#c32026" strokeWidth="1.500" /></I>
      </Task>
      <Tray>
        <span>EN</span>
        <Tri $dir="up" $c="#fff" />
        <TrayIcons>
          <Svg><path d="M2.500 2v11" stroke="#fff" strokeWidth="1.500" /><path d="M3 2c3-1 4 2 8 0v6c-4 2-5-1-8 0z" fill="#e8eef5" stroke="none" /><circle cx="9" cy="9.500" r="3.500" fill="#d0322b" stroke="#fff" strokeWidth=".5" /><path d="M7.500 8l3 3M10.500 8l-3 3" stroke="#fff" /></Svg>
          <Svg><path d="M5.500 4.500h8v6h-8zM7 12.500h5M3.500 3v9h3M1.500 1.500h4v3h-4z" stroke="#fff" /></Svg>
          <Svg><path d="M2 5h2l4-3v10L4 9H2z" fill="#fff" stroke="none" /><path d="M9.500 5q1.500 2 0 4M11.500 3.500q2.500 3.500 0 7" stroke="#fff" /></Svg>
        </TrayIcons>
        <Clock>12:16 PM<br />12/3/2013</Clock>
        <ShowDesktop aria-label="Show desktop" />
      </Tray>
    </Taskbar>
  );
}

export default function App() {
  return (
    <Desktop>
      <Global />
      <SharedDefs width="0" height="0">
        <defs>
          <linearGradient id="gh"><stop stopColor="#333" /><stop offset="1" stopColor="#fff" /></linearGradient>
          <linearGradient id="gl"><stop stopColor="#fff" /><stop offset="1" stopColor="#777" /></linearGradient>
          <linearGradient id="gv" x2="0" y2="1"><stop stopColor="#eee" /><stop offset="1" stopColor="#444" /></linearGradient>
        </defs>
      </SharedDefs>
      <BrowserStrip>
        <BrowserTab $w={134}><Favicon $c="#2f4f9a" /></BrowserTab>
        <BrowserTab $w={140} $active><Favicon $c="#b02a35" /></BrowserTab>
        <BrowserTab $w={18} />
      </BrowserStrip>
      <Stage>
        <PageBits><PlusOne>g+1</PlusOne><PlusOne $blue>g+1</PlusOne></PageBits>
        <Window>
          <MenuBar>
            <Logo>Id</Logo>
            <Menus>
              {["File", "Edit", "Layout", "Type", "Object", "Table", "View", "Window", "Help"].map((m) => <MenuItem key={m}>{m}</MenuItem>)}
            </Menus>
            <Rule />
            <BridgeButton>Br</BridgeButton>
            <Zoom>561% <Tri $c="#444" /></Zoom>
            <Rule />
            <ViewMenus>
              <ViewButton aria-label="View options"><Svg w={14} h={12}><path d="M1 1h13v2H1zM1 3h3v9H1z" fill="#555" stroke="none" /><path d="M.5.5h13v11H.5z" stroke="#444" strokeDasharray="2 1" /></Svg><Tri /></ViewButton>
              <ViewButton aria-label="Screen mode"><Svg w={14} h={12}><path d="M3.500 2.500h7v6h-7z" fill="#888" /><path d="M1 3V.5h2M11 .5h2V3M1 9v2.500h2M11 11.500h2V9M3 11h8" /></Svg><Tri /></ViewButton>
              <ViewButton aria-label="Arrange documents"><Svg w={14} h={12}><path d="M.5.5h13v11H.5z" fill="#555" /><path d="M2 2h5v8H2z" fill="#999" stroke="none" /><path d="M8 2h4v3H8zM8 7h4v3H8z" fill="#ccc" stroke="none" /></Svg><Tri /></ViewButton>
            </ViewMenus>
            <MenuRight>
              <Rule />
              <Essentials>Essentials <Tri $c="#444" /></Essentials>
              <Search><Svg w={10} h={10}><circle cx="6" cy="4" r="3" /><path d="M4 6L1 9" strokeWidth="1.500" /></Svg><input aria-label="Search" /></Search>
              <Caption>
                <CaptionButton $w={21} aria-label="Minimize"><Svg w={9} h={9}><path d="M1 6h7" strokeWidth="2.500" /></Svg></CaptionButton>
                <CaptionButton $w={20} aria-label="Maximize"><Svg w={9} h={9}><path d="M1.500 2h6v5h-6z" strokeWidth="1.500" /></Svg></CaptionButton>
                <CaptionButton $w={36} aria-label="Close"><Svg w={9} h={9}><path d="M1.500 1.500l6 6M7.500 1.500l-6 6" strokeWidth="2" /></Svg></CaptionButton>
              </Caption>
            </MenuRight>
          </MenuBar>
          <Controls />
          <Tabs>
            <Tab>*pofolio 2.indd @ 49% <Cross /></Tab>
            <Tab $on>*pofolio.indd @ 561% <Cross /></Tab>
          </Tabs>
          <DocGrid>
            <RulerBox $h><svg width="13" height="13" stroke="#444"><path d="M0 6.500h13M6.500 0v13" strokeDasharray="2 1" /><path d="M12.500 0v13" /></svg></RulerBox>
            <HRuler />
            <VRuler />
            <Canvas>
              <Note>why always right here ???  F*** !!!</Note>
              <ArrowMark>
                <svg width="24" height="54" viewBox="0 0 24 54"><path d="M7.500 2h10v25.500H22L12 50 2 27.500h5.500z" fill="#fff" stroke="#cf2229" strokeWidth="3" /></svg>
              </ArrowMark>
              <Story>dfhdfh   fdhfdnd</Story>
              <PageFrame />
            </Canvas>
            <VScroll><Tri $dir="up" $c="#555" /><ThumbV /><Tri $c="#555" /></VScroll>
          </DocGrid>
          <StatusBar>
            <StatusButton aria-label="First page"><Svg w={7} h={7}><path d="M1 0v7" /><path d="M6 0v7L2 3.500z" fill={ink} stroke="none" /></Svg></StatusButton>
            <StatusButton aria-label="Previous page"><Tri $dir="left" /></StatusButton>
            <PageCombo><select aria-label="Page" defaultValue="13"><option>13</option></select><Tri /></PageCombo>
            <StatusButton aria-label="Next page"><Tri $dir="right" $c="#777" /></StatusButton>
            <StatusButton aria-label="Last page"><Svg w={7} h={7}><path d="M6 0v7" stroke="#777" /><path d="M1 0v7l4-3.500z" fill="#777" stroke="none" /></Svg></StatusButton>
            <StatusButton $w={18} aria-label="Open"><Svg w={12} h={10}><circle cx="5" cy="5" r="4" fill="#ddd" /><path d="M4 3l5 5" strokeWidth="2" /></Svg></StatusButton>
            <Preflight><Dot />30 errors</Preflight>
            <Tri $c="#555" />
            <StatusButton $w={18} aria-label="Scroll left"><Tri $dir="left" /></StatusButton>
            <HTrack><ThumbH><Svg w={8} h={5}><path d="M1.500 0v5M4.500 0v5M7.500 0v5" stroke="#777" /></Svg></ThumbH></HTrack>
            <StatusButton aria-label="Scroll right"><Tri $dir="right" /></StatusButton>
            <Pane /><Pane />
            <StatusButton $w={13} aria-label="Resize"><Svg w={8} h={8}><path d="M7 1v7M4 4v4M1 6v2" stroke="#aaa" strokeDasharray="1 1" /></Svg></StatusButton>
          </StatusBar>
          <Tools />
          <CharacterPanel />
          <Dock />
          <ParagraphPanel />
        </Window>
      </Stage>
      <TaskBar />
    </Desktop>
  );
}
